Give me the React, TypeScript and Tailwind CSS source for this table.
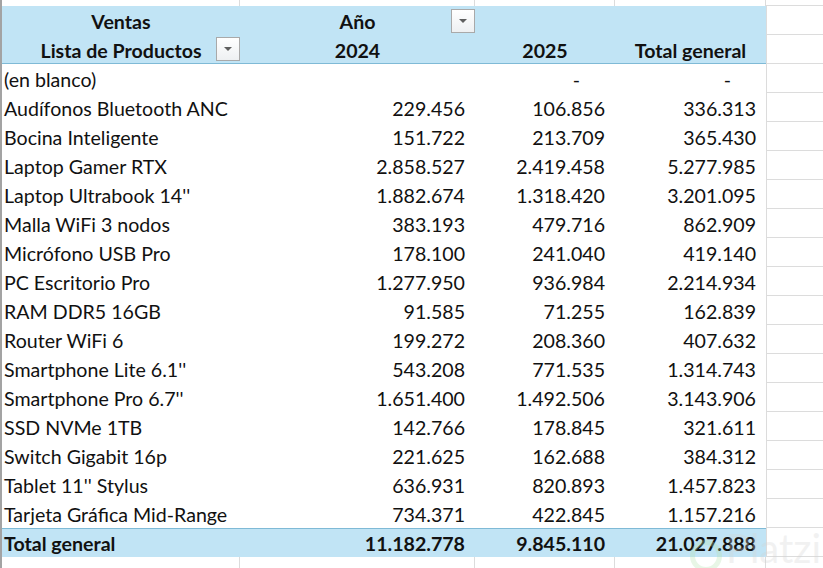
import React from "react";

const rows: [string, string, string, string][] = [
  ["(en blanco)", "", "-", "-"],
  ["Audífonos Bluetooth ANC", "229.456", "106.856", "336.313"],
  ["Bocina Inteligente", "151.722", "213.709", "365.430"],
  ["Laptop Gamer RTX", "2.858.527", "2.419.458", "5.277.985"],
  ["Laptop Ultrabook 14''", "1.882.674", "1.318.420", "3.201.095"],
  ["Malla WiFi 3 nodos", "383.193", "479.716", "862.909"],
  ["Micrófono USB Pro", "178.100", "241.040", "419.140"],
  ["PC Escritorio Pro", "1.277.950", "936.984", "2.214.934"],
  ["RAM DDR5 16GB", "91.585", "71.255", "162.839"],
  ["Router WiFi 6", "199.272", "208.360", "407.632"],
  ["Smartphone Lite 6.1''", "543.208", "771.535", "1.314.743"],
  ["Smartphone Pro 6.7''", "1.651.400", "1.492.506", "3.143.906"],
  ["SSD NVMe 1TB", "142.766", "178.845", "321.611"],
  ["Switch Gigabit 16p", "221.625", "162.688", "384.312"],
  ["Tablet 11'' Stylus", "636.931", "820.893", "1.457.823"],
  ["Tarjeta Gráfica Mid-Range", "734.371", "422.845", "1.157.216"],
];

const cols = "grid grid-cols-[238px_235px_140px_151px_1fr]";

function Dropdown() {
  return (
    <div className="w-6 h-6 border border-[#a9a9a9] bg-gradient-to-b from-white to-[#eef0f2] flex items-center justify-center">
      <div className="w-0 h-0 border-l-[4px] border-r-[4px] border-t-[4px] border-l-transparent border-r-transparent border-t-[#5f5f5f]" />
    </div>
  );
}

function Num({ v }: { v: string }) {
  // los ceros se muestran como guion, con sangría como en el formato contable
  return (
    <div className={`flex items-center justify-end pt-[3px] ${v === "-" ? "pr-[35px]" : "pr-[10px]"}`}>{v}</div>
  );
}

export default function App() {
  return (
    <div
      className="relative w-[823px] h-[568px] overflow-hidden bg-white border-l-2 border-[#a3a3a3] text-[19.6px] text-[#111] leading-none"
      style={{ fontFamily: "Lato, 'Open Sans', sans-serif" }}
    >
      {/* fila superior */}
      <div className={`${cols} h-[6px]`}>
        <div className="border-r border-[#dcdcdc]" />
        <div className="border-r border-[#dcdcdc]" />
        <div className="border-r border-[#dcdcdc]" />
        <div className="border-r border-[#dcdcdc]" />
        <div className="border-b border-[#dcdcdc]" />
      </div>

      {/* encabezado */}
      <div className={`${cols} h-[29px] font-bold`}>
        <div className="bg-[#c1e4f5] flex items-center justify-center pt-[3px]">Ventas</div>
        <div className="bg-[#c1e4f5] relative flex items-center justify-center pt-[3px]">
          Año
          <div className="absolute right-0 top-[3px]"><Dropdown /></div>
        </div>
        <div className="bg-[#c1e4f5]" />
        <div className="bg-[#c1e4f5]" />
        <div className="border-b border-l border-[#dcdcdc]" />
      </div>
      <div className={`${cols} h-[29px] font-bold`}>
        <div className="bg-[#c1e4f5] border-b border-[#7fbad6] relative flex items-center justify-center pt-[3px]">
          Lista de Productos
          <div className="absolute right-0 top-[2px]"><Dropdown /></div>
        </div>
        <div className="bg-[#c1e4f5] border-b border-[#7fbad6] flex items-center justify-center pt-[3px]">2024</div>
        <div className="bg-[#c1e4f5] border-b border-[#7fbad6] flex items-center justify-center pt-[3px]">2025</div>
        <div className="bg-[#c1e4f5] border-b border-[#7fbad6] flex items-center justify-center pt-[3px]">Total general</div>
        <div className="border-b border-l border-[#dcdcdc]" />
      </div>

      {/* datos */}
      {rows.map((r, i) => (
        <div key={i} className={`${cols} h-[29px]`}>
          <div className="flex items-center pl-[2px] pt-[3px] whitespace-nowrap">{r[0]}</div>
          <Num v={r[1]} />
          <Num v={r[2]} />
          <Num v={r[3]} />
          <div className="border-b border-l border-[#dcdcdc]" />
        </div>
      ))}

      {/* total */}
      <div className={`${cols} h-[29px] font-bold`}>
        <div className="bg-[#c1e4f5] border-t border-[#7fbad6] flex items-center pl-[2px] pt-[2px]">Total general</div>
        <div className="bg-[#c1e4f5] border-t border-[#7fbad6] flex items-center justify-end pr-[10px] pt-[2px]">11.182.778</div>
        <div className="bg-[#c1e4f5] border-t border-[#7fbad6] flex items-center justify-end pr-[10px] pt-[2px]">9.845.110</div>
        <div className="bg-[#c1e4f5] border-t border-[#7fbad6] flex items-center justify-end pr-[10px] pt-[2px]">21.027.888</div>
        <div className="border-b border-l border-[#dcdcdc]" />
      </div>

      {/* fila inferior */}
      <div className={`${cols} h-[12px]`}>
        <div className="border-r border-[#dcdcdc]" />
        <div className="border-r border-[#dcdcdc]" />
        <div className="border-r border-[#dcdcdc]" />
        <div className="border-r border-[#dcdcdc]" />
        <div />
      </div>

      {/* marca de agua */}
      <div className="absolute left-[688px] top-[524px] flex items-center gap-1 opacity-30 pointer-events-none">
        <div className="w-8 h-8 rounded-full border-[5px] border-[#b5e3b0] mt-4" />
        <span className="text-[40px] font-normal text-[#d4d4d4]" style={{ fontFamily: "Lato, sans-serif" }}>Platzi</span>
      </div>
    </div>
  );
}
